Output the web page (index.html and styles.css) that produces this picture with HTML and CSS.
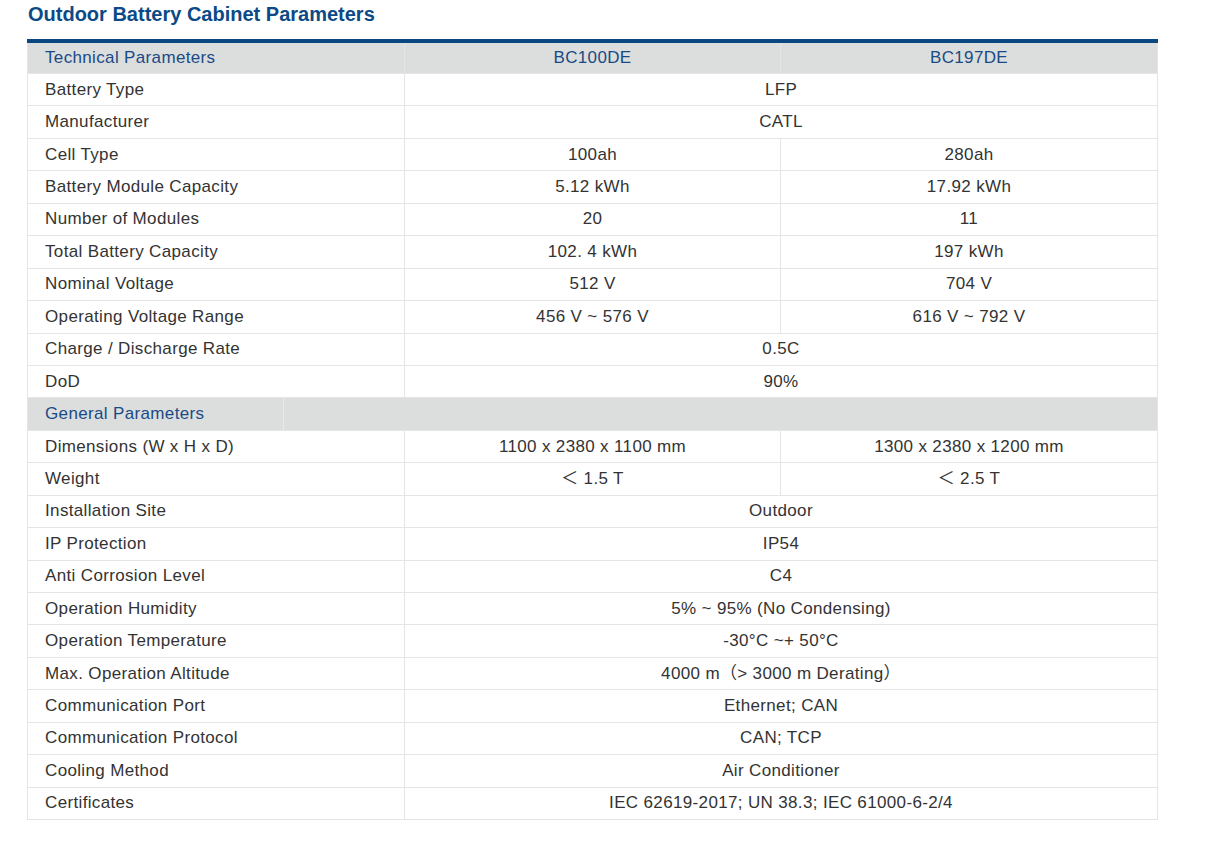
FILE: index.html
```html
<!DOCTYPE html>
<html>
<head>
<meta charset="utf-8">
<link rel="stylesheet" href="styles.css">
</head>
<body>
<div class="page">
  <h2 class="title">Outdoor Battery Cabinet Parameters</h2>
  <table class="params">
    <colgroup><col class="c1"><col class="c2"><col class="c3"></colgroup>
    <tr class="head"><td class="label">Technical Parameters</td><td>BC100DE</td><td>BC197DE</td></tr>
    <tr><td class="label">Battery Type</td><td colspan="2">LFP</td></tr>
    <tr><td class="label">Manufacturer</td><td colspan="2">CATL</td></tr>
    <tr><td class="label">Cell Type</td><td>100ah</td><td>280ah</td></tr>
    <tr><td class="label">Battery Module Capacity</td><td>5.12 kWh</td><td>17.92 kWh</td></tr>
    <tr><td class="label">Number of Modules</td><td>20</td><td>11</td></tr>
    <tr><td class="label">Total Battery Capacity</td><td>102. 4 kWh</td><td>197 kWh</td></tr>
    <tr><td class="label">Nominal Voltage</td><td>512 V</td><td>704 V</td></tr>
    <tr><td class="label">Operating Voltage Range</td><td>456 V ~ 576 V</td><td>616 V ~ 792 V</td></tr>
    <tr><td class="label">Charge / Discharge Rate</td><td colspan="2">0.5C</td></tr>
    <tr><td class="label">DoD</td><td colspan="2">90%</td></tr>
    <tr class="head section"><td colspan="3"><div class="section-row"><div class="section-label">General Parameters</div><div class="section-rest"></div></div></td></tr>
    <tr><td class="label">Dimensions (W x H x D)</td><td>1100 x 2380 x 1100 mm</td><td>1300 x 2380 x 1200 mm</td></tr>
    <tr><td class="label">Weight</td><td>＜ 1.5 T</td><td>＜ 2.5 T</td></tr>
    <tr><td class="label">Installation Site</td><td colspan="2">Outdoor</td></tr>
    <tr><td class="label">IP Protection</td><td colspan="2">IP54</td></tr>
    <tr><td class="label">Anti Corrosion Level</td><td colspan="2">C4</td></tr>
    <tr><td class="label">Operation Humidity</td><td colspan="2">5% ~ 95% (No Condensing)</td></tr>
    <tr><td class="label">Operation Temperature</td><td colspan="2">-30°C ~+ 50°C</td></tr>
    <tr><td class="label">Max. Operation Altitude</td><td colspan="2">4000 m（&gt; 3000 m Derating）</td></tr>
    <tr><td class="label">Communication Port</td><td colspan="2">Ethernet; CAN</td></tr>
    <tr><td class="label">Communication Protocol</td><td colspan="2">CAN; TCP</td></tr>
    <tr><td class="label">Cooling Method</td><td colspan="2">Air Conditioner</td></tr>
    <tr><td class="label">Certificates</td><td colspan="2">IEC 62619-2017; UN 38.3; IEC 61000-6-2/4</td></tr>
  </table>
</div>
</body>
</html>
```
FILE: styles.css
```css
html, body {
  margin: 0;
  padding: 0;
  background: #ffffff;
}
.page {
  padding: 0 0 0 27px;
  font-family: "Liberation Sans", Arial, "Noto Sans CJK SC", sans-serif;
}
.title {
  margin: 0;
  padding: 2px 0 0 1px;
  height: 37px;
  font-size: 20px;
  line-height: 24px;
  font-weight: bold;
  color: #0b4a86;
}
.params {
  width: 1130px;
  border-collapse: collapse;
  table-layout: fixed;
  border-top: 4px solid #0a4680;
}
.c1 { width: 377px; }
.c2 { width: 376px; }
.c3 { width: 377px; }
.params td {
  border: 1px solid #e5e5e5;
  height: 31.45px;
  padding: 0;
  font-size: 17px;
  line-height: 20px;
  letter-spacing: 0.35px;
  color: #333333;
  text-align: center;
  vertical-align: middle;
}
.params td.label {
  text-align: left;
  padding-left: 17px;
}
.params tr.head td {
  background: #dcdedd;
  color: #1a4a85;
  border-top: none;
}
.params tr.head:first-child td {
  height: 30px;
}
.params tr.section td {
  padding: 0;
}
.section-row {
  display: flex;
  height: 31.45px;
  align-items: stretch;
}
.section-label {
  width: 238px;
  padding-left: 17px;
  border-right: 1px solid #e8e9e9;
  display: flex;
  align-items: center;
  text-align: left;
}
.section-rest {
  flex: 1;
}
```
